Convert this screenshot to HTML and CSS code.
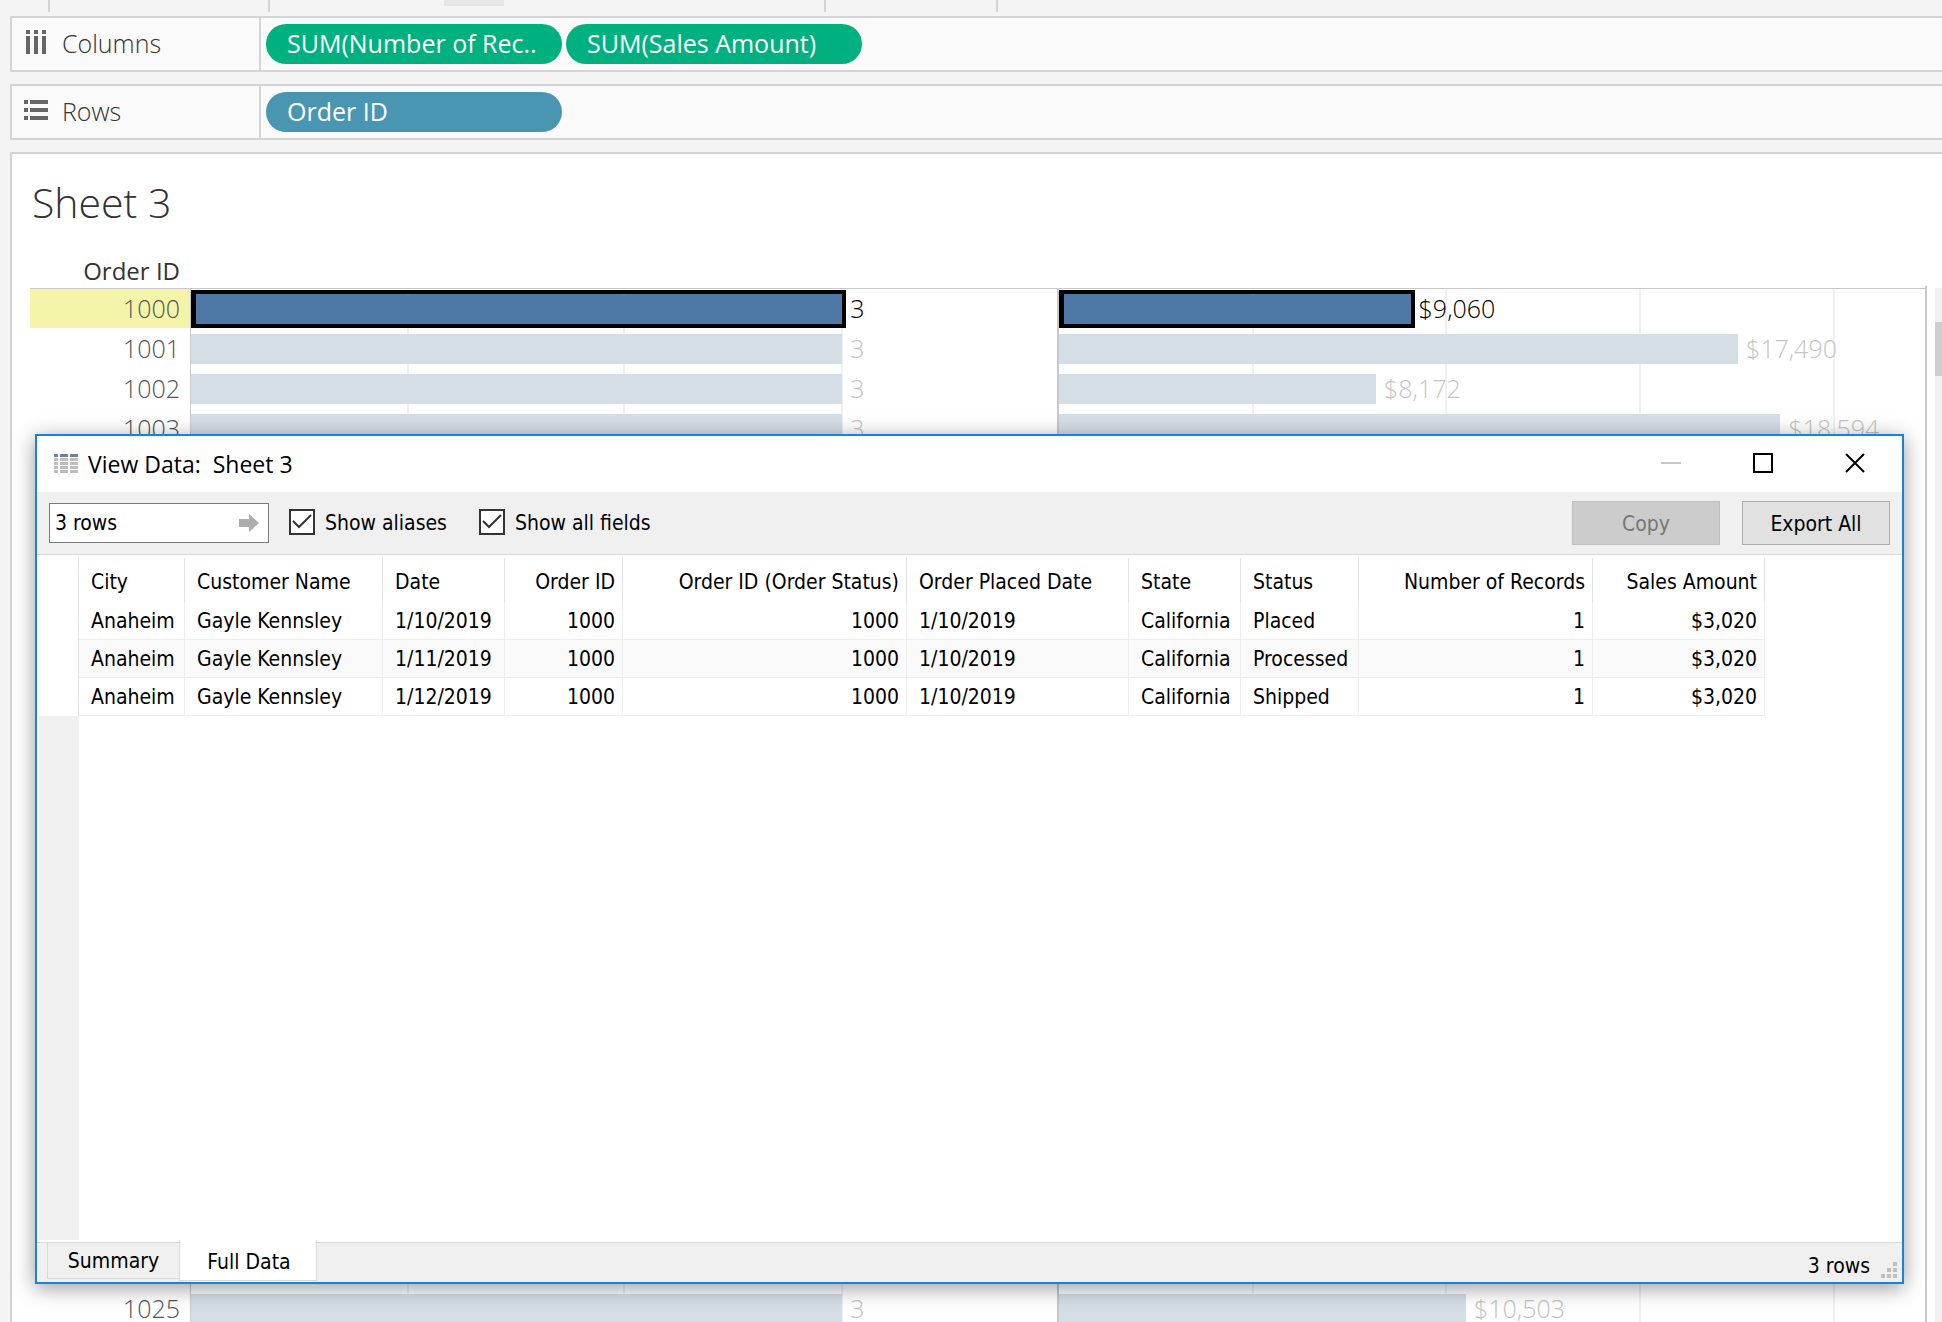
FILE: index.html
```html
<!DOCTYPE html>
<html lang="en">
<head>
<meta charset="utf-8">
<title>Sheet 3</title>
<link rel="stylesheet" href="styles.css">
</head>
<body>
<div class="strip" aria-hidden="true">
  <div class="strip-cell strip-cell-a"></div>
  <div class="strip-cell strip-cell-b"><div class="strip-handle"></div></div>
  <div class="strip-cell strip-cell-c"></div>
  <div class="strip-cell"></div>
</div>

<main class="workspace">
  <section class="shelf">
    <div class="shelf-label">
      <svg class="shelf-icon" width="26" height="26" viewBox="0 0 26 26" fill="#666" aria-hidden="true">
        <path d="M3 1h4v4H3zM3 7h4v18H3zM11 1h4v4h-4zM11 7h4v18h-4zM19 1h4v4h-4zM19 7h4v18h-4z"/>
      </svg>
      <span>Columns</span>
    </div>
    <div class="pills">
      <button class="pill measure" type="button">SUM(Number of Rec..</button>
      <button class="pill measure" type="button">SUM(Sales Amount)</button>
    </div>
  </section>

  <section class="shelf">
    <div class="shelf-label">
      <svg class="shelf-icon" width="26" height="26" viewBox="0 0 26 26" fill="#666" aria-hidden="true">
        <path d="M1 3h4v4H1zM7 3h18v4H7zM1 11h4v4H1zM7 11h18v4H7zM1 19h4v4H1zM7 19h18v4H7z"/>
      </svg>
      <span>Rows</span>
    </div>
    <div class="pills">
      <button class="pill dimension" type="button">Order ID</button>
    </div>
  </section>

  <section class="sheet">
    <h1 class="sheet-title">Sheet 3</h1>
    <div class="chart-area">
      <div class="chart">
        <div class="chart-head">Order ID</div>
        <div class="chart-body">
          <div class="ids">
            <div class="id selected">1000</div>
            <div class="id">1001</div>
            <div class="id">1002</div>
            <div class="id">1003</div>
            <div class="covered"></div>
            <div class="id">1025</div>
          </div>
          <div class="pane records">
            <div class="mark selected"><div class="bar" style="width:75.2%"></div><span>3</span></div>
            <div class="mark"><div class="bar" style="width:75.2%"></div><span>3</span></div>
            <div class="mark"><div class="bar" style="width:75.2%"></div><span>3</span></div>
            <div class="mark"><div class="bar" style="width:75.2%"></div><span>3</span></div>
            <div class="covered"></div>
            <div class="mark"><div class="bar" style="width:75.2%"></div><span>3</span></div>
          </div>
          <div class="pane amounts">
            <div class="mark selected"><div class="bar" style="width:40.6%"></div><span>$9,060</span></div>
            <div class="mark"><div class="bar" style="width:78.4%"></div><span>$17,490</span></div>
            <div class="mark"><div class="bar" style="width:36.6%"></div><span>$8,172</span></div>
            <div class="mark"><div class="bar" style="width:83.3%"></div><span>$18,594</span></div>
            <div class="covered"></div>
            <div class="mark"><div class="bar" style="width:47%"></div><span>$10,503</span></div>
          </div>
        </div>
      </div>
      <div class="scrollbar"><div class="thumb"></div></div>
    </div>
  </section>
</main>

<section class="dialog" role="dialog" aria-labelledby="dialog-title">
  <header class="titlebar">
    <svg class="title-icon" width="24" height="20" viewBox="0 0 24 20" aria-hidden="true">
      <path fill="#75808f" d="M0 0h4v3H0zM6 0h8v3H6zM16 0h8v3h-8z"/>
      <path fill="#bdbdbd" d="M0 4h4v3H0zM6 4h8v3H6zM16 4h8v3h-8zM0 8h4v3H0zM6 8h8v3H6zM16 8h8v3h-8zM0 12h4v3H0zM6 12h8v3H6zM16 12h8v3h-8zM0 16h4v3H0zM6 16h8v3H6zM16 16h8v3h-8z"/>
    </svg>
    <h2 class="title" id="dialog-title">View Data:&nbsp; Sheet 3</h2>
    <button class="win" type="button" aria-label="Minimize" disabled>
      <svg width="20" height="20" viewBox="0 0 20 20"><path d="M0 10h20" stroke="#c8c8c8" stroke-width="2"/></svg>
    </button>
    <button class="win" type="button" aria-label="Maximize">
      <svg width="20" height="20" viewBox="0 0 20 20"><path d="M1 1h18v18H1z" fill="none" stroke="#000" stroke-width="2"/></svg>
    </button>
    <button class="win" type="button" aria-label="Close">
      <svg width="20" height="20" viewBox="0 0 20 20"><path d="M1 1l18 18M19 1L1 19" stroke="#000" stroke-width="2"/></svg>
    </button>
  </header>

  <div class="toolbar">
    <div class="rows-field">
      <input class="rows-input" type="text" value="3 rows" aria-label="Rows to show">
      <button class="go" type="button" aria-label="Apply">
        <svg width="20" height="18" viewBox="0 0 20 18"><path fill="#adadad" d="M0 5h10V0l10 9-10 9v-5H0z"/></svg>
      </button>
    </div>
    <label class="check">
      <span class="tick"><input type="checkbox" checked><svg width="26" height="26" viewBox="0 0 26 26"><path d="M4 12l6 6L22 6" fill="none" stroke="#333" stroke-width="2"/></svg></span>
      <span>Show aliases</span>
    </label>
    <label class="check">
      <span class="tick"><input type="checkbox" checked><svg width="26" height="26" viewBox="0 0 26 26"><path d="M4 12l6 6L22 6" fill="none" stroke="#333" stroke-width="2"/></svg></span>
      <span>Show all fields</span>
    </label>
    <div class="actions">
      <button class="action" type="button" disabled>Copy</button>
      <button class="action" type="button">Export All</button>
    </div>
  </div>

  <div class="grid-area">
    <div class="gutter"></div>
    <table class="data">
      <colgroup>
        <col class="w-city"><col class="w-customer"><col class="w-date"><col class="w-order"><col class="w-order-status"><col class="w-placed"><col class="w-state"><col class="w-status"><col class="w-records"><col class="w-amount">
      </colgroup>
      <thead>
        <tr><th>City</th><th>Customer Name</th><th>Date</th><th class="num">Order ID</th><th class="num">Order ID (Order Status)</th><th>Order Placed Date</th><th>State</th><th>Status</th><th class="num">Number of Records</th><th class="num">Sales Amount</th></tr>
      </thead>
      <tbody>
        <tr><td>Anaheim</td><td>Gayle Kennsley</td><td>1/10/2019</td><td class="num">1000</td><td class="num">1000</td><td>1/10/2019</td><td>California</td><td>Placed</td><td class="num">1</td><td class="num">$3,020</td></tr>
        <tr><td>Anaheim</td><td>Gayle Kennsley</td><td>1/11/2019</td><td class="num">1000</td><td class="num">1000</td><td>1/10/2019</td><td>California</td><td>Processed</td><td class="num">1</td><td class="num">$3,020</td></tr>
        <tr><td>Anaheim</td><td>Gayle Kennsley</td><td>1/12/2019</td><td class="num">1000</td><td class="num">1000</td><td>1/10/2019</td><td>California</td><td>Shipped</td><td class="num">1</td><td class="num">$3,020</td></tr>
      </tbody>
    </table>
  </div>

  <footer class="footer">
    <div class="tabs" role="tablist">
      <button class="tab" type="button" role="tab" aria-selected="false">Summary</button>
      <button class="tab current" type="button" role="tab" aria-selected="true">Full Data</button>
    </div>
    <span class="count">3 rows</span>
    <svg class="grip" width="16" height="16" viewBox="0 0 16 16" fill="#bfbfbf" aria-hidden="true">
      <path d="M12 0h4v4h-4zM6 6h4v4H6zM12 6h4v4h-4zM0 12h4v4H0zM6 12h4v4H6zM12 12h4v4h-4z"/>
    </svg>
  </footer>
</section>
</body>
</html>
```
FILE: styles.css
```css
* { box-sizing: border-box; }

body {
  margin: 0;
  height: 100vh;
  overflow: hidden;
  position: relative;
  display: flex;
  flex-direction: column;
  background: #f4f4f4;
  color: #333;
  font-family: "Open Sans", "Noto Sans", sans-serif;
  font-size: 25px;
  line-height: 32px;
}

button, input { font: inherit; color: inherit; margin: 0; padding: 0; border: 0; }
svg { display: block; }

/* Bottom edge of the cards above the shelves */
.strip { display: flex; flex: none; height: 16px; padding-left: 48px; }
.strip-cell { height: 12px; border-left: 2px solid #d4d4d4; }
.strip-cell-a { width: 220px; }
.strip-cell-b { width: 556px; padding-left: 174px; }
.strip-cell-c { width: 172px; }
.strip-handle { width: 60px; height: 6px; background: #e6e6e6; }

.workspace {
  flex: 1;
  min-height: 0;
  display: flex;
  flex-direction: column;
  gap: 12px;
  padding-left: 10px;
}

/* Shelves */
.shelf {
  flex: none;
  display: flex;
  height: 56px;
  border: 2px solid #d4d4d4;
  border-right: 0;
  background: #fafafa;
}
.shelf-label {
  display: flex;
  align-items: center;
  gap: 13px;
  width: 249px;
  padding: 0 0 2px 11px;
  border-right: 2px solid #d4d4d4;
  font-weight: 300;
}
.shelf-icon { margin-bottom: 2px; }
.pills { display: flex; align-items: center; gap: 4px; padding-left: 5px; }
.pill {
  width: 296px;
  height: 40px;
  padding: 0 21px 2px;
  border-radius: 20px;
  color: #fff;
  font-weight: 500;
  text-align: left;
  white-space: nowrap;
}
.measure { background: #00b180; }
.dimension { background: #4996b2; }

/* Sheet */
.sheet {
  flex: 1;
  min-height: 0;
  overflow: hidden;
  border: 2px solid #d4d4d4;
  border-width: 2px 0 0 2px;
  background: #fff;
}
.sheet-title {
  margin: 0;
  padding: 22px 20px 28px;
  font-size: 41px;
  font-weight: 300;
  line-height: 52px;
}
.chart-area { display: flex; gap: 8px; padding-left: 18px; }
.chart { flex: 1; border-right: 2px solid #c8c8c8; border-image: linear-gradient(#fff 32px, #c8c8c8 32px) 2; border-width: 0 2px 0 0; }
.chart-head {
  width: 100%;
  padding-right: calc(100% - 150px);
  border-bottom: 1px solid #c8c8c8;
  height: 33px;
  font-size: 24px;
  font-weight: 500;
  line-height: 30px;
  text-align: right;
  white-space: nowrap;
}
.chart-body { display: flex; line-height: 24px; }
.ids { flex: none; width: 160px; }
.id {
  display: flex;
  align-items: center;
  justify-content: flex-end;
  height: 40px;
  padding: 0 10px 2px 0;
  font-weight: 300;
  color: #555;
}
.id.selected { background: #f5f5aa; background-clip: padding-box; border-bottom: 1px solid #fff; }
.covered { height: 840px; }
.pane {
  flex: 1 1 0;
  box-sizing: content-box;
  border-left: 1px solid #c8c8c8;
  background-repeat: no-repeat;
  background-size: 2px 100%;
  background-image:
    linear-gradient(#f0f0f0, #f0f0f0), linear-gradient(#f0f0f0, #f0f0f0),
    linear-gradient(#f0f0f0, #f0f0f0), linear-gradient(#f0f0f0, #f0f0f0);
}
.records { background-position: 25% 0, 50% 0, 75.2% 0, 75.2% 0; }
.amounts { border-left-width: 2px; background-position: 22.3% 0, 44.7% 0, 67.1% 0, 89.6% 0; }
.mark {
  display: flex;
  align-items: center;
  gap: 8px;
  height: 40px;
  font-weight: 300;
  color: #c4c4c4;
}
.mark span { padding-bottom: 2px; }
.bar { flex: none; height: 30px; background: #d5dde5; }
.mark.selected { color: #000; }
/* The selection outline reaches past the end of the bar */
.mark.selected .bar {
  box-sizing: content-box;
  margin-right: -4px;
  border: 4px solid #000;
  border-left: 0;
  background: linear-gradient(#000, #000) 0 0 / 5px 100% no-repeat #4e79a7;
}
.scrollbar { flex: none; width: 7px; margin-top: 32px; padding-top: 34px; background: #f0f0f0; }
.thumb { height: 54px; background: #cdcdcd; }

/* View Data window */
.dialog {
  position: absolute;
  top: 434px;
  right: 38px;
  bottom: 38px;
  left: 35px;
  display: flex;
  flex-direction: column;
  border: 2px solid #1883d7;
  background: #fff;
  box-shadow: 0 4px 20px rgba(0, 0, 0, 0.4);
  color: #000;
  font-family: "DejaVu Sans Condensed", "DejaVu Sans", sans-serif;
  font-size: 21px;
  line-height: 28px;
}
.titlebar { flex: none; display: flex; align-items: center; height: 56px; padding: 0 1px 0 17px; }
.title {
  flex: 1;
  margin: 0;
  padding-left: 10px;
  font-family: "Open Sans", "Noto Sans", sans-serif;
  font-size: 23px;
  font-weight: 400;
}
.win {
  display: flex;
  align-items: center;
  justify-content: center;
  width: 92px;
  height: 56px;
  padding-bottom: 2px;
  background: none;
}

.toolbar {
  flex: none;
  display: flex;
  align-items: center;
  height: 63px;
  padding: 0 12px;
  border-bottom: 1px solid #d9d9d9;
  background: #f0f0f0;
}
.rows-field {
  display: flex;
  align-items: center;
  width: 220px;
  height: 40px;
  margin-right: 20px;
  padding: 0 9px 0 5px;
  border: 1px solid #7a7a7a;
  background: #fff;
}
.rows-input { flex: 1; min-width: 0; background: none; outline: 0; }
.go { background: none; }
.check { display: flex; align-items: center; gap: 10px; margin-right: 32px; }
.tick { display: grid; padding-bottom: 2px; }
.tick > * { grid-area: 1 / 1; }
.tick input {
  appearance: none;
  width: 26px;
  height: 26px;
  border: 2px solid #333;
  background: #fff;
}
.actions { display: flex; gap: 22px; margin-left: auto; }
.action { width: 148px; height: 44px; padding-top: 2px; border: 1px solid #adadad; background: #e1e1e1; }
.action:disabled { border-color: #bfbfbf; background: #ccc; color: #777; }

.grid-area { flex: 1; display: flex; min-height: 0; padding: 3px 0 2px 2px; }
.gutter { flex: none; width: 40px; margin-top: 158px; background: #f0f0f0; }
.data {
  align-self: flex-start;
  table-layout: fixed;
  width: 1687px;
  margin-left: -1px;
  border-collapse: separate;
  border-spacing: 0;
  border-left: 1px solid #e2e2e2;
}
.w-city { width: 106px; }
.w-customer { width: 198px; }
.w-date { width: 122px; }
.w-order { width: 118px; }
.w-order-status { width: 284px; }
.w-placed { width: 222px; }
.w-state { width: 112px; }
.w-status { width: 118px; }
.w-records { width: 234px; }
.w-amount { width: 172px; }
.data th, .data td {
  padding: 0 7px 0 12px;
  border-right: 1px solid #eee;
  font-weight: 400;
  text-align: left;
  white-space: nowrap;
}
.data th { height: 44px; padding-top: 4px; border-right-color: #e2e2e2; }
.data td { height: 38px; border-bottom: 1px solid #eee; }
.data tbody tr:nth-child(even) { background: #fafafa; }
.data .num { text-align: right; }

.footer {
  flex: none;
  display: flex;
  align-items: center;
  height: 40px;
  padding: 0 5px 0 10px;
  border-top: 1px solid #d9d9d9;
  background: #f0f0f0;
}
.tabs { display: flex; align-self: flex-start; flex: 1; }
.tab {
  width: 132px;
  height: 36px;
  border: 1px solid #d9d9d9;
  border-width: 0 0 1px 1px;
  background: #f0f0f0;
}
.tab.current {
  width: 138px;
  height: 41px;
  margin-top: -3px;
  padding: 4px 0 0 2px;
  border-width: 0 1px 1px;
  background: #fff;
}
.count { padding: 6px 11px 0 0; }
.grip { margin-top: 14px; }
```
